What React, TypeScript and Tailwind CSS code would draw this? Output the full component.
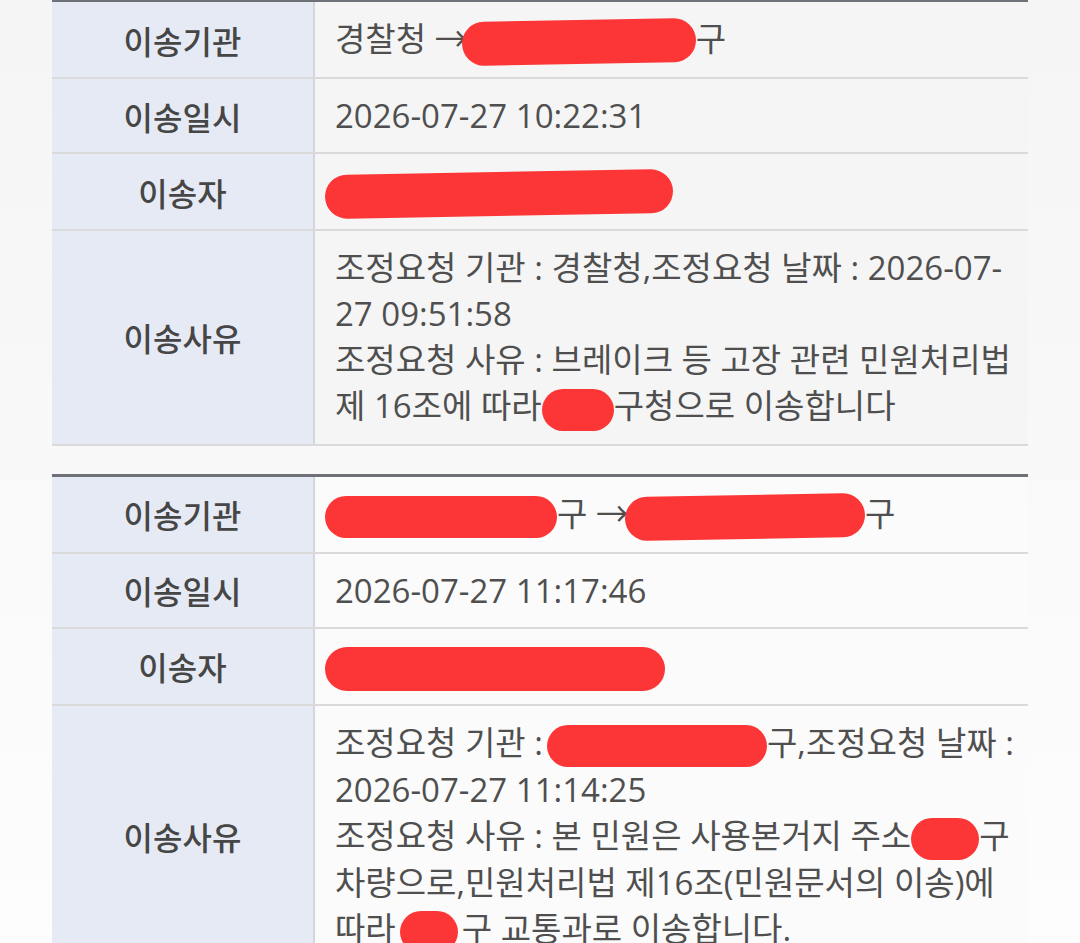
import React from "react";

const font = { fontFamily: '"Open Sans", "Noto Sans CJK KR", "Noto Sans", sans-serif' };
const labelFont = { fontFamily: '"Noto Sans CJK KR", "Noto Sans", sans-serif' };

// red redaction scribble
const Blob: React.FC<{ className: string }> = ({ className }) => (
  <span className={`inline-block align-middle bg-[#fc3636] rounded-[999px] ${className}`} />
);

const Row: React.FC<{ label: string; last?: boolean; children: React.ReactNode }> = ({
  label,
  last,
  children,
}) => (
  <div className={`grid grid-cols-[263px_1fr] ${last ? "" : "border-b-2 border-[#dadada]"}`}>
    <div
      className="bg-[#e6eaf4] border-r-2 border-[#d3d6dd] flex items-center justify-center text-[32px] font-medium text-[#464646]"
      style={labelFont}
    >
      {label}
    </div>
    <div className="px-[20px] pt-[14px] pb-[13px] text-[33px] leading-[46px] text-[#4f4f4f]">{children}</div>
  </div>
);

const Line: React.FC<{ children: React.ReactNode }> = ({ children }) => (
  <div className="whitespace-nowrap">{children}</div>
);

export default function App() {
  return (
    <div className="min-h-screen bg-gradient-to-b from-[#f5f5f5] to-[#fdfdfd] px-[52px]" style={font}>
      {/* first transfer */}
      <section className="border-t-2 border-[#6e7178] bg-[#f5f5f5] border-b-2 border-b-[#dadada]">
        <Row label="이송기관">
          경찰청 →<Blob className="w-[234px] h-[44px] -ml-[6px] -rotate-1" />구
        </Row>
        <Row label="이송일시">2026-07-27 10:22:31</Row>
        <Row label="이송자">
          <Blob className="w-[348px] h-[44px] -ml-[10px] rotate-[-1deg]" />
        </Row>
        <Row label="이송사유" last>
          <Line>조정요청 기관 : 경찰청,조정요청 날짜 : 2026-07-</Line>
          <Line>27 09:51:58</Line>
          <Line>조정요청 사유 : 브레이크 등 고장 관련 민원처리법</Line>
          <Line>
            제 16조에 따라<Blob className="w-[72px] h-[42px]" />구청으로 이송합니다
          </Line>
        </Row>
      </section>

      {/* second transfer */}
      <section className="mt-[28px] border-t-[3px] border-[#6e7178] bg-[#fbfbfb]">
        <Row label="이송기관">
          <Blob className="w-[232px] h-[42px] -ml-[10px]" />구 →
          <Blob className="w-[240px] h-[44px] -ml-[4px] rotate-[-1deg]" />구
        </Row>
        <Row label="이송일시">2026-07-27 11:17:46</Row>
        <Row label="이송자">
          <Blob className="w-[340px] h-[44px] -ml-[10px]" />
        </Row>
        <Row label="이송사유" last>
          <Line>
            조정요청 기관 :<Blob className="w-[220px] h-[42px] ml-[4px]" />구,조정요청 날짜 :
          </Line>
          <Line>2026-07-27 11:14:25</Line>
          <Line>
            조정요청 사유 : 본 민원은 사용본거지 주소<Blob className="w-[68px] h-[42px]" />구
          </Line>
          <Line>차량으로,민원처리법 제16조(민원문서의 이송)에</Line>
          <Line>
            따라<Blob className="w-[58px] h-[42px] ml-[4px] mr-[4px]" />구 교통과로 이송합니다.
          </Line>
        </Row>
      </section>
    </div>
  );
}
